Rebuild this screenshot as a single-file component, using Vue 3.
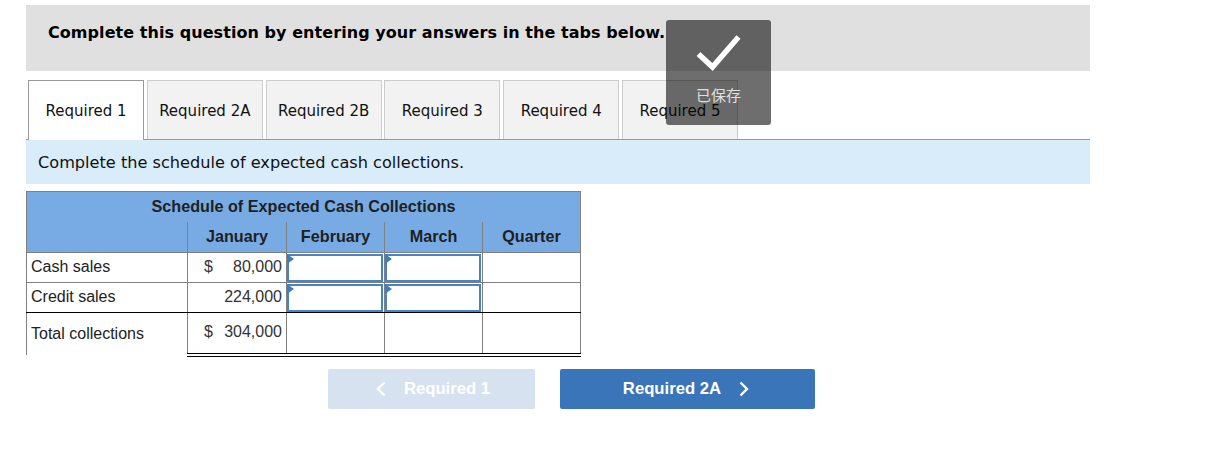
<script setup>
const TABS = ['Required 1', 'Required 2A', 'Required 2B', 'Required 3', 'Required 4', 'Required 5'];

const ROWS = [
	{ label: 'Cash sales', dollar: true, amount: '80,000' },
	{ label: 'Credit sales', dollar: false, amount: '224,000' },
];
</script>

<template>
	<div class="page">
		<div class="banner">Complete this question by entering your answers in the tabs below.</div>

		<div class="tabs">
			<div v-for="(tab, index) in TABS" :key="tab" class="tab" :class="{ active: index === 0 }">{{ tab }}</div>
		</div>

		<div class="prompt">Complete the schedule of expected cash collections.</div>

		<table class="schedule">
			<colgroup>
				<col class="col-label" />
				<col class="col-jan" />
				<col class="col-num" />
				<col class="col-num" />
				<col class="col-num" />
			</colgroup>
			<thead>
				<tr class="title-row">
					<th colspan="5">Schedule of Expected Cash Collections</th>
				</tr>
				<tr class="month-row">
					<th class="blank"></th>
					<th>January</th>
					<th>February</th>
					<th>March</th>
					<th>Quarter</th>
				</tr>
			</thead>
			<tbody>
				<tr v-for="row in ROWS" :key="row.label" class="data-row">
					<td class="label">{{ row.label }}</td>
					<td class="money">
						<span class="dollar">{{ row.dollar ? '$' : '' }}</span>
						<span>{{ row.amount }}</span>
					</td>
					<td class="entry"><input type="text" /><i class="marker"></i></td>
					<td class="entry"><input type="text" /><i class="marker"></i></td>
					<td></td>
				</tr>
				<tr class="total-row">
					<td class="label">Total collections</td>
					<td class="money">
						<span class="dollar">$</span>
						<span>304,000</span>
					</td>
					<td></td>
					<td></td>
					<td></td>
				</tr>
			</tbody>
		</table>

		<div class="nav">
			<button class="nav-btn prev" type="button">
				<svg width="10" height="16" viewBox="0 0 10 16"><path d="M8.500 1.500 2 8l6.500 6.500" fill="none" stroke="#fff" stroke-width="2.400" /></svg>
				<span>Required 1</span>
			</button>
			<button class="nav-btn next" type="button">
				<span>Required 2A</span>
				<svg width="10" height="16" viewBox="0 0 10 16"><path d="M1.500 1.500 8 8l-6.500 6.500" fill="none" stroke="#fff" stroke-width="2.400" /></svg>
			</button>
		</div>

		<div class="toast">
			<svg width="46" height="38" viewBox="0 0 46 38"><path d="M2.500 20 16.500 33 42.500 3" fill="none" stroke="#fff" stroke-width="5.500" /></svg>
			<span>已保存</span>
		</div>
	</div>
</template>

<style scoped>
.page {
	position: relative;
	width: 1064px;
	padding: 5px 0 0 26px;
	font-family: "Liberation Sans", Arial, sans-serif;
	color: #1a1a1a;
}

.banner {
	height: 66px;
	padding: 18px 0 0 22px;
	box-sizing: border-box;
	background: #e0e0e0;
	font-family: "DejaVu Sans", Verdana, sans-serif;
	font-size: 16px;
	font-weight: bold;
	letter-spacing: 0.06px;
	line-height: 20px;
	color: #000;
}

.tabs {
	display: flex;
	gap: 2.800px;
	height: 60px;
	margin-top: 9px;
	padding-left: 2px;
	box-sizing: border-box;
	border-bottom: 1px solid #999;
}

.tab {
	width: 116px;
	height: 59px;
	box-sizing: border-box;
	border: 1px solid #ccc;
	border-bottom: none;
	background: #f2f2f2;
	font-family: "DejaVu Sans", Verdana, sans-serif;
	font-size: 15px;
	line-height: 60px;
	text-align: center;
	color: #111;
}

.tab.active {
	border-color: #999;
	background: #fff;
	height: 60px;
}

.prompt {
	height: 44px;
	padding-left: 12px;
	background: #d9ecfa;
	font-family: "DejaVu Sans", Verdana, sans-serif;
	font-size: 16.150px;
	line-height: 46px;
	color: #111;
}

.schedule {
	width: 554px;
	margin-top: 7px;
	border-collapse: collapse;
	table-layout: fixed;
	font-size: 16px;
}

.col-label {
	width: 161px;
}

.col-jan {
	width: 99px;
}

.col-num {
	width: 98px;
}

th {
	padding: 0;
	background: #78abe4;
	font-size: 16.200px;
	font-weight: bold;
	text-align: center;
	color: #1f1f1f;
}

.title-row th {
	height: 28px;
	padding-bottom: 2px;
	border: 1px solid #808080;
	border-bottom: none;
}

.month-row th {
	height: 28px;
	padding-bottom: 2px;
	border-left: 1px solid #808080;
	border-right: 1px solid #808080;
	border-bottom: 1px solid #808080;
}

td {
	padding: 0;
	border: 1px solid #808080;
}

.data-row td {
	height: 28px;
}

.data-row td.label,
.data-row td.money {
	padding-bottom: 1px;
}

.data-row:nth-child(2) td {
	border-bottom-color: #000;
}

.label {
	padding-left: 4px;
	color: #222;
}

.money {
	position: relative;
	padding-right: 4px;
	text-align: right;
	color: #333;
}

.dollar {
	position: absolute;
	left: 16px;
}

.entry {
	position: relative;
}

.entry input {
	display: block;
	width: 96px;
	height: 28px;
	margin: 0;
	padding: 0;
	box-sizing: border-box;
	border: 2px solid #4a83c4;
	background: #fff;
	outline: none;
}

.marker {
	position: absolute;
	left: 0;
	top: 1px;
	border-left: 7px solid #3f7cc0;
	border-top: 5px solid transparent;
	border-bottom: 5px solid transparent;
}

.total-row td {
	height: 37px;
	border-top-color: #000;
	border-bottom: 4px double #000;
}

.total-row td.label {
	border-bottom: none;
	border-top-color: #808080;
}

.total-row td.money {
	padding-bottom: 3px;
}

.nav {
	display: flex;
	gap: 25px;
	margin: 12px 0 0 302px;
}

.nav-btn {
	display: flex;
	align-items: center;
	justify-content: center;
	height: 40px;
	padding: 0;
	border: none;
	border-radius: 2px;
	font-family: "Liberation Sans", Arial, sans-serif;
	font-size: 16.700px;
	font-weight: bold;
	color: #fff;
}

.prev {
	width: 207px;
	gap: 18px;
	padding-left: 3px;
	background: #d7e2f0;
}

.next {
	width: 255px;
	gap: 18px;
	padding-right: 3px;
	background: #3a75ba;
}

.toast {
	position: absolute;
	left: 666px;
	top: 20px;
	display: flex;
	flex-direction: column;
	align-items: center;
	width: 105px;
	height: 105px;
	padding-top: 14px;
	box-sizing: border-box;
	border-radius: 3px;
	background: rgba(0, 0, 0, 0.57);
	font-family: "Noto Sans CJK SC", sans-serif;
	font-size: 15px;
	line-height: 20px;
	color: #e0e0e0;
}

.toast span {
	margin-top: 13px;
}
</style>
